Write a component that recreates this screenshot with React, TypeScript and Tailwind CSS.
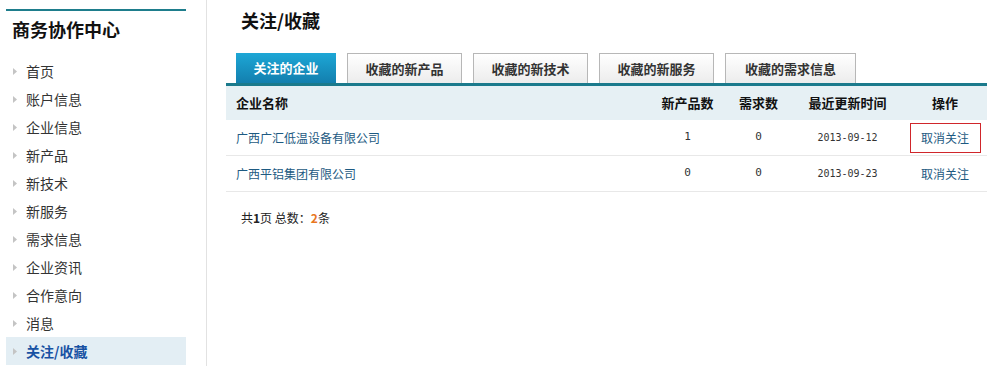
import React from "react";

const menu = ["首页", "账户信息", "企业信息", "新产品", "新技术", "新服务", "需求信息", "企业资讯", "合作意向", "消息", "关注/收藏"];
const tabs = [
  { label: "关注的企业", w: "w-[100px]" },
  { label: "收藏的新产品", w: "w-[115px]" },
  { label: "收藏的新技术", w: "w-[115px]" },
  { label: "收藏的新服务", w: "w-[115px]" },
  { label: "收藏的需求信息", w: "w-[131px]" },
];
const rows = [
  { name: "广西广汇低温设备有限公司", p: "1", d: "0", t: "2013-09-12", boxed: true },
  { name: "广西平铝集团有限公司", p: "0", d: "0", t: "2013-09-23", boxed: false },
];

export default function App() {
  const font = { fontFamily: '"Noto Sans CJK SC", "Noto Sans", sans-serif' };
  const mono = { fontFamily: '"DejaVu Sans Mono", monospace' };
  return (
    <div className="w-[989px] h-[374px] bg-white flex text-[#333]" style={font}>
      <div className="w-[207px] pl-[6px] pt-[9px] shrink-0 border-r border-[#e2e2e2] h-[366px]">
        <div className="w-[180px] border-t-2 border-[#1e7d8c]">
          <div className="h-[36px] flex items-center pl-[6px] text-[18px] font-bold text-[#111]">商务协作中心</div>
          <div className="mt-[10px] flex flex-col">
            {menu.map((m, i) => {
              const active = i === menu.length - 1;
              return (
                <div key={m} className={`h-[28px] flex items-center pl-[7px] ${active ? "bg-[#e3eef4]" : ""}`}>
                  <svg width="4" height="7" viewBox="0 0 4 7" className="mr-[9px]">
                    <polygon points="0,0 4,3.5 0,7" fill="#c4c4c4" />
                  </svg>
                  <span className={`text-[14px] ${active ? "font-bold text-[#1852a3]" : "text-[#333]"}`}>{m}</span>
                </div>
              );
            })}
          </div>
        </div>
      </div>
      <div className="flex-1 pl-[19px] pr-[2px]">
        <div className="h-[41px] flex items-center pl-[15px] text-[18px] font-bold text-[#111]">关注/收藏</div>
        <div className="flex items-end pl-[10px] gap-[11px] mt-[12px] h-[30px]">
          {tabs.map((t, i) => (
            <div
              key={t.label}
              className={`${t.w} h-[30px] flex items-center justify-center text-[13px] font-bold ${
                i === 0
                  ? "bg-gradient-to-b from-[#1da7d6] to-[#137fae] text-white"
                  : "bg-gradient-to-b from-white to-[#ececec] border border-b-0 border-[#b7b7b7] text-[#333]"
              }`}
            >
              {t.label}
            </div>
          ))}
        </div>
        <div className="border-t-[3px] border-[#1b7a8c]">
          <div className="h-[34px] bg-[#e6f0f4] flex items-center text-[13px] font-bold text-[#111]">
            <div className="flex-1 pl-[10px]">企业名称</div>
            <div className="w-[75px] text-center">新产品数</div>
            <div className="w-[67px] text-center">需求数</div>
            <div className="w-[111px] text-center">最近更新时间</div>
            <div className="w-[84px] text-center">操作</div>
          </div>
          {rows.map((r) => (
            <div key={r.name} className="h-[36px] flex items-center text-[12px] border-b border-[#e8e8e8]">
              <div className="flex-1 pl-[10px] text-[#1d5a82]">{r.name}</div>
              <div className="w-[75px] text-center text-[11px]" style={mono}>{r.p}</div>
              <div className="w-[67px] text-center text-[11px]" style={mono}>{r.d}</div>
              <div className="w-[111px] text-center text-[10px]" style={mono}>{r.t}</div>
              <div className="w-[84px] flex justify-center">
                <div className={`w-[71px] h-[30px] flex items-center justify-center text-[#1d5a82] ${r.boxed ? "border border-[#d0262b]" : ""}`}>取消关注</div>
              </div>
            </div>
          ))}
        </div>
        <div className="pl-[15px] mt-[17px] text-[12px] text-[#222]">
          共<b>1</b>页 总数：<b className="text-[#e8771f]">2</b>条
        </div>
      </div>
    </div>
  );
}
